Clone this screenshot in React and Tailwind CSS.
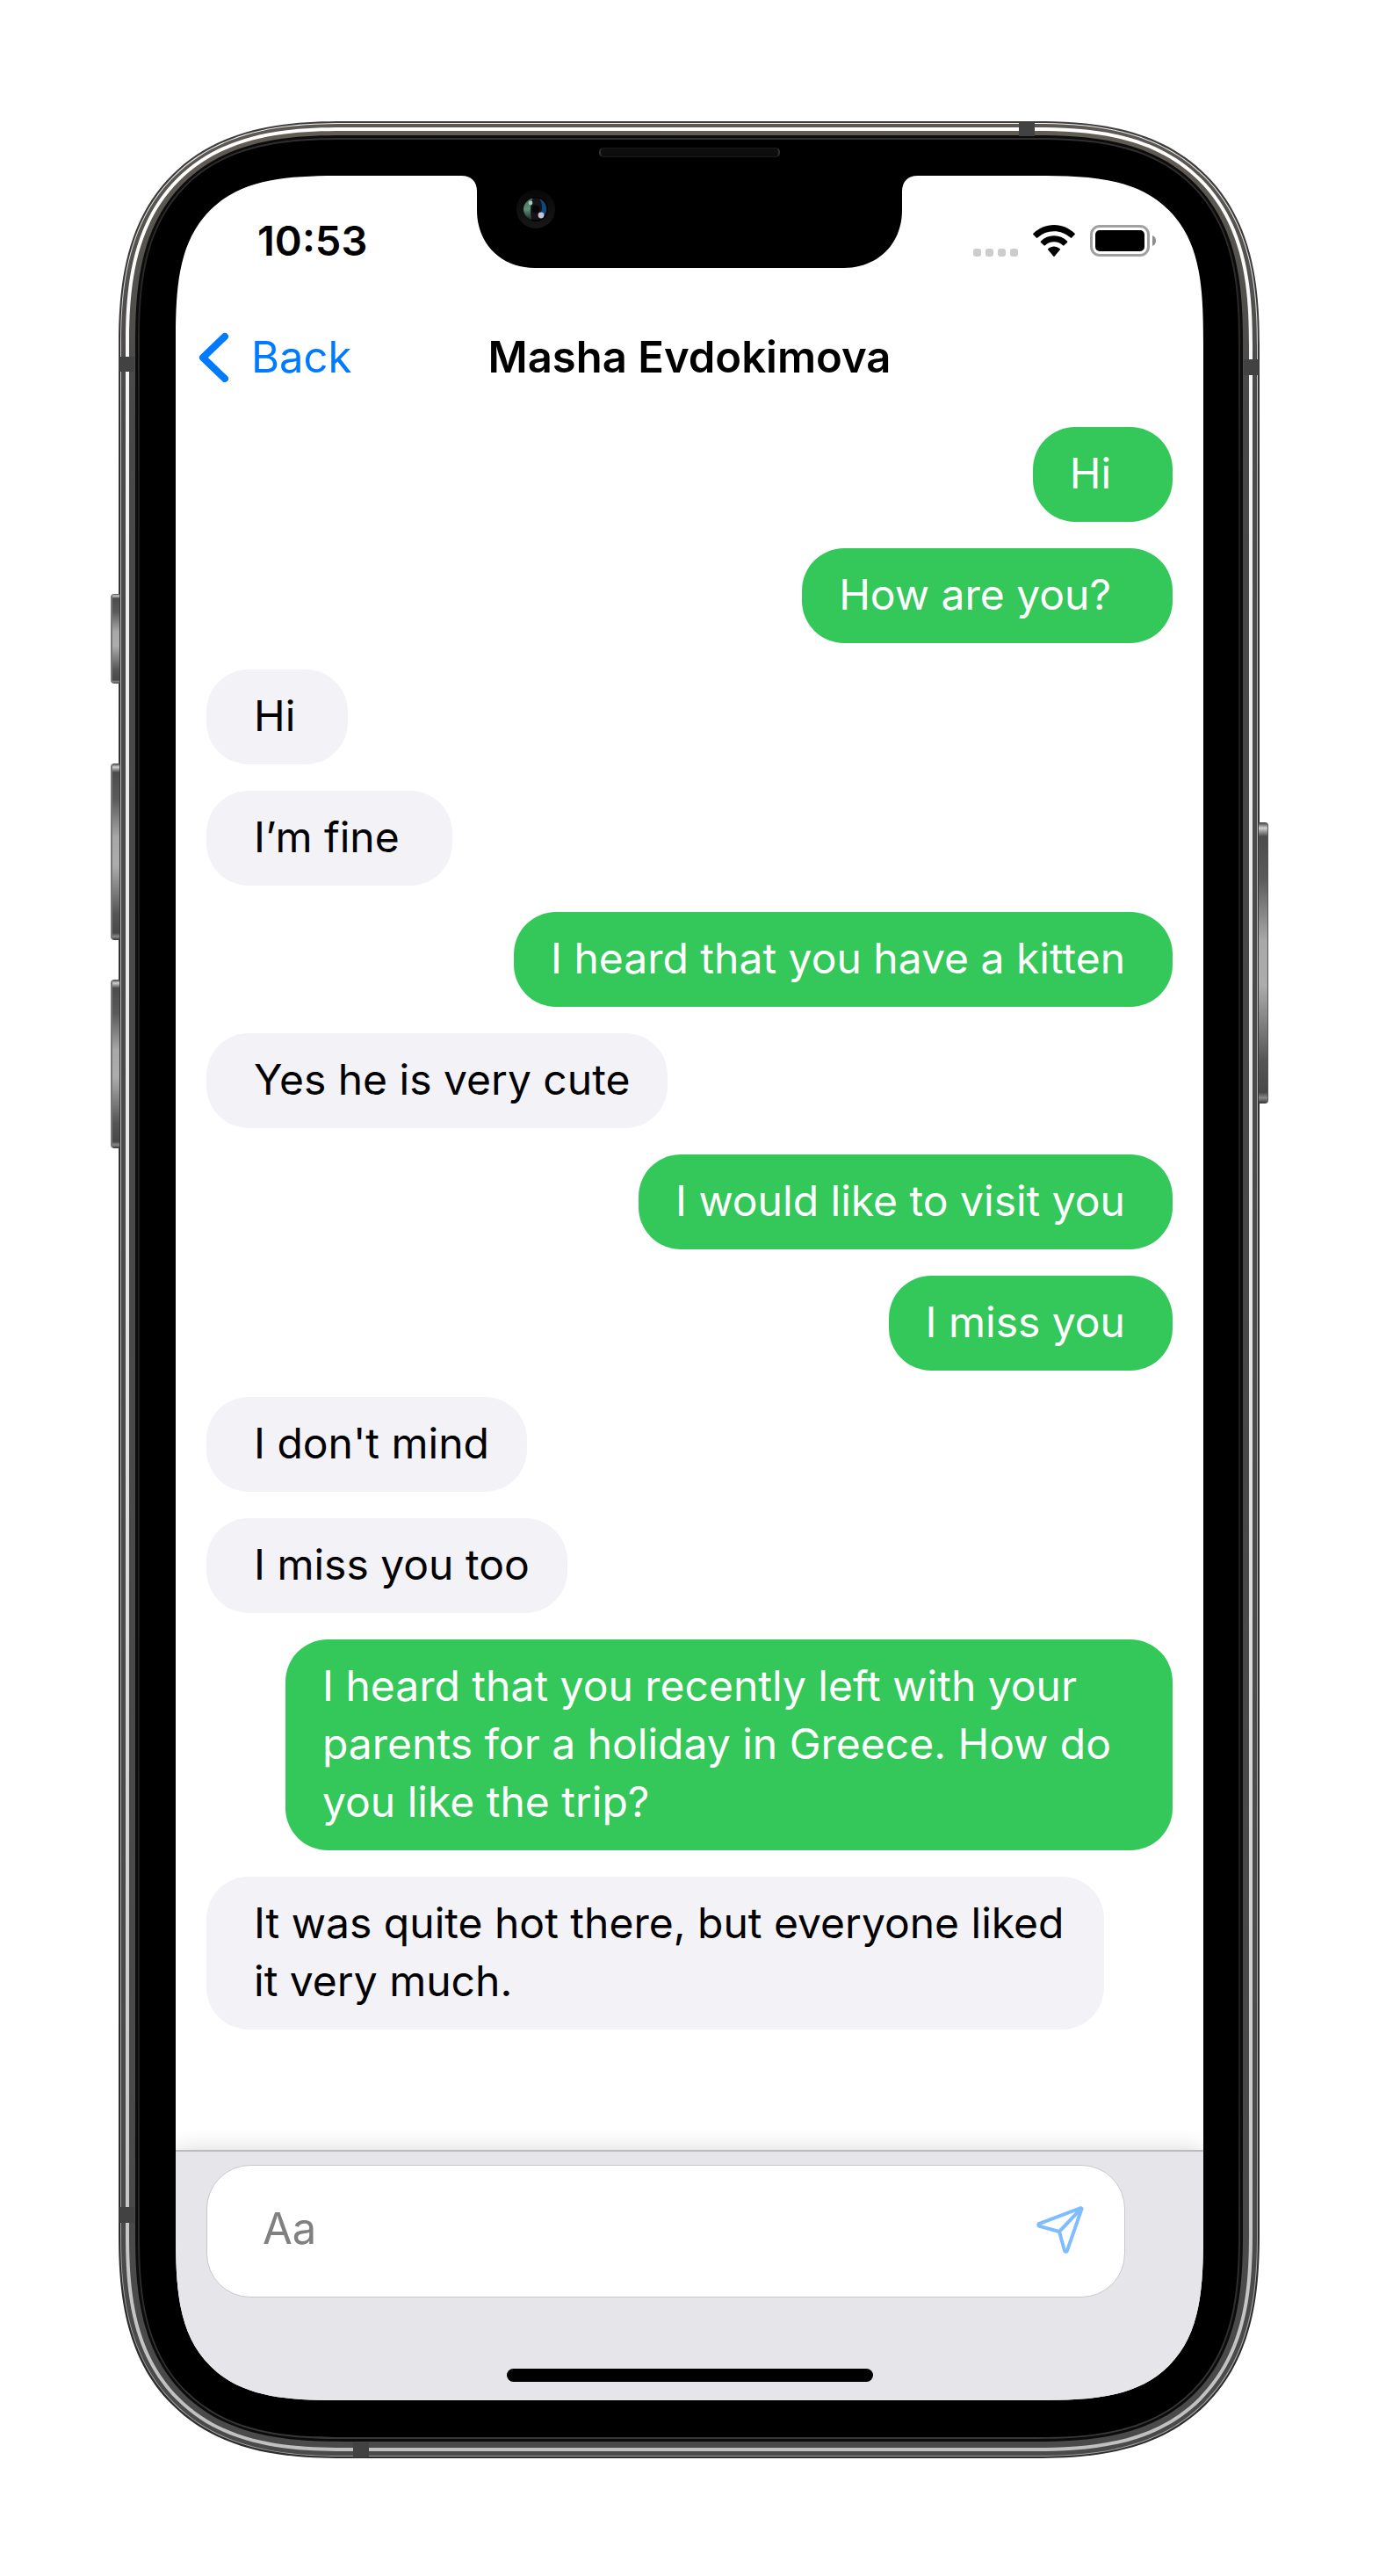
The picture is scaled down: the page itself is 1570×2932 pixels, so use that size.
import { useState } from "react";

const FONT = "font-['Inter','Liberation_Sans',sans-serif]";

const MESSAGES = [
  { mine: true, text: "Hi", pad: "pr-[70px]" },
  { mine: true, text: "How are you?", pad: "pr-[70px]" },
  { mine: false, text: "Hi", pad: "pr-[60px]" },
  { mine: false, text: "I’m fine", pad: "pr-[60px]" },
  { mine: true, text: "I heard that you have a kitten", pad: "pr-[54px]" },
  { mine: false, text: "Yes he is very cute", pad: "pr-[43px]" },
  { mine: true, text: "I would like to visit you", pad: "pr-[54px]" },
  { mine: true, text: "I miss you", pad: "pr-[54px]" },
  { mine: false, text: "I don't mind", pad: "pr-[43px]" },
  { mine: false, text: "I miss you too", pad: "pr-[43px]" },
  {
    mine: true,
    text: "I heard that you recently left with your parents for a holiday in Greece. How do you like the trip?",
    pad: "max-w-[1010px] pr-[54px]",
  },
  {
    mine: false,
    text: "It was quite hot there, but everyone liked it very much.",
    pad: "max-w-[1022px] pr-[30px]",
  },
];

function Bubble({ mine, text, pad }) {
  const side = mine
    ? "self-end bg-[#34c759] pl-[42px] text-white"
    : "self-start bg-[#f2f2f7] pl-[54px] text-black";
  return <li className={`w-fit rounded-[48px] pt-[20px] pb-[22px] ${side} ${pad}`}>{text}</li>;
}

function Chevron() {
  return (
    <svg className="h-[58px] w-[35px]" viewBox="0 0 35 58" fill="none" aria-hidden="true">
      <path d="M30 5 5 29 30 53" stroke="#007aff" strokeWidth="8" strokeLinecap="round" strokeLinejoin="round" />
    </svg>
  );
}

function StatusIcons() {
  return (
    <div className="flex items-center" aria-hidden="true">
      <div className="mt-[26px] flex gap-[5px]">
        <span className="size-[9px] rounded-[3px] bg-[#ccc]" />
        <span className="size-[9px] rounded-[3px] bg-[#ccc]" />
        <span className="size-[9px] rounded-[3px] bg-[#ccc]" />
        <span className="size-[9px] rounded-[3px] bg-[#ccc]" />
      </div>
      <svg className="ml-[17px] h-[36px] w-[48px]" viewBox="0 0 48 36">
        <path d="M24 0C15 0 6.500 3.700.4 9.700a1 1 0 0 0 0 1.400l3.400 3.500a1 1 0 0 0 1.400 0A27.500 27.500 0 0 1 24 7.200c7 0 13.600 2.600 18.800 7.400a1 1 0 0 0 1.400 0l3.400-3.500a1 1 0 0 0 0-1.400C41.500 3.700 33 0 24 0Z" />
        <path d="M24 12.300c-5.600 0-11 2.200-15 6.100a1 1 0 0 0 0 1.500l3.500 3.400a1 1 0 0 0 1.400 0 14.700 14.700 0 0 1 20.200 0 1 1 0 0 0 1.400 0l3.500-3.400a1 1 0 0 0 0-1.500c-4-3.900-9.400-6.100-15-6.100Z" />
        <path d="M24 24.500c-2.500 0-4.800.9-6.600 2.500a1 1 0 0 0 0 1.500l5.800 6.900a1 1 0 0 0 1.600 0l5.800-6.900a1 1 0 0 0 0-1.500 10 10 0 0 0-6.600-2.500Z" />
      </svg>
      <svg className="ml-[17px] h-[36px] w-[76px]" viewBox="0 0 76 36">
        <rect x="1.500" y="1.500" width="65" height="33" rx="9.500" fill="none" stroke="#a0a0a0" strokeWidth="3" />
        <rect x="6" y="6" width="56" height="24" rx="5" />
        <path d="M71 12c2.500 1 4 3 4 6s-1.500 5-4 6Z" fill="#8c8c8c" />
      </svg>
    </div>
  );
}

function Notch() {
  return (
    <svg className="absolute top-0 left-1/2 h-[105px] w-[520px] -translate-x-1/2" viewBox="0 0 520 105" aria-hidden="true">
      <defs>
        <linearGradient id="ring" x1="0" y1="0" x2="0" y2="1">
          <stop offset="0" stopColor="#070707" />
          <stop offset="1" stopColor="#171717" />
        </linearGradient>
        <linearGradient id="green" x1="0" y1="0" x2="0" y2="1">
          <stop offset="0" stopColor="#45685a" />
          <stop offset=".5" stopColor="#5f907a" />
          <stop offset="1" stopColor="#1b2a25" />
        </linearGradient>
      </defs>
      <path d="M0 0C12 0 18 7 18 18V39C18 79 47 105 84 105H436C473 105 502 79 502 39V18C502 7 508 0 520 0Z" />
      <circle cx="85" cy="38" r="22" fill="url(#ring)" />
      <circle cx="85" cy="38" r="14" fill="#000" />
      <circle cx="85" cy="38" r="12.500" fill="#141316" />
      <path d="M81 26A12.500 12.500 0 0 0 80 50C78 43 78 33 81 26Z" fill="url(#green)" stroke="url(#green)" strokeWidth="1" />
      <path d="M89 26C93 32 93 38 90 44A8 8 0 0 0 94 46A12.500 12.500 0 0 0 89 26Z" fill="#11477f" />
      <circle cx="85" cy="38" r="4.500" fill="#080708" />
      <circle cx="79" cy="31" r="2.400" fill="#a9c8bb" />
      <circle cx="91" cy="45" r="3.400" fill="#c5c3dc" />
    </svg>
  );
}

function SideKey({ className }) {
  return (
    <div
      className={`absolute bg-[linear-gradient(#3c3c3c,#d0d0d0_2%,#4c4c4c_5%,#5a5a5a_20%,#a8a8a8_42%,#acacac_58%,#555_85%,#484848_96%,#8a8a8a_98%,#333)] ${className}`}
    />
  );
}

/* Metal rim: concentric bands that run from the outside edge to the black glass. */
function Rim({ children }) {
  return (
    <div className="flex flex-1 flex-col rounded-[203px] bg-[linear-gradient(#3e3e3e,#333_15%,#2c2c2c)] p-[2px] supports-[corner-shape:superellipse(2)]:rounded-[256px] supports-[corner-shape:superellipse(2)]:[corner-shape:superellipse(1.35)]">
      <div className="flex flex-1 flex-col rounded-[201px] bg-[linear-gradient(#f0f0f0,#b8b8b8_15%,#a0a0a0)] p-px supports-[corner-shape:superellipse(2)]:rounded-[254px] supports-[corner-shape:superellipse(2)]:[corner-shape:superellipse(1.35)]">
        <div className="flex flex-1 flex-col rounded-[200px] bg-[linear-gradient(#5d5852,#4a4a4a_12%,#4a4a4a)] px-[5px] pt-[4px] pb-[5px] supports-[corner-shape:superellipse(2)]:rounded-[253px] supports-[corner-shape:superellipse(2)]:[corner-shape:superellipse(1.35)]">
          <div className="flex flex-1 flex-col rounded-[195px] bg-[linear-gradient(#fff,#eee_20%,#e6e6e6_50%,#c0c0c0)] p-[4px] supports-[corner-shape:superellipse(2)]:rounded-[248px] supports-[corner-shape:superellipse(2)]:[corner-shape:superellipse(1.37)]">
            <div className="flex flex-1 flex-col rounded-[191px] bg-[linear-gradient(#615c54,#484848_12%,#4a4a4a)] px-[7px] pt-[5px] pb-[7px] supports-[corner-shape:superellipse(2)]:rounded-[244px] supports-[corner-shape:superellipse(2)]:[corner-shape:superellipse(1.38)]">
              <div className="flex flex-1 flex-col rounded-[184px] bg-[#0c0c0c] p-[3px] supports-[corner-shape:superellipse(2)]:rounded-[237px] supports-[corner-shape:superellipse(2)]:[corner-shape:superellipse(1.4)]">
                <div className="flex flex-1 flex-col rounded-[181px] bg-[linear-gradient(#303030,#1e1e1e_15%,#1e1e1e_85%,#383838)] p-[2px] supports-[corner-shape:superellipse(2)]:rounded-[234px] supports-[corner-shape:superellipse(2)]:[corner-shape:superellipse(1.41)]">
                  <div className="flex flex-1 flex-col rounded-[179px] bg-black pt-[41px] pr-[40px] pb-[42px] pl-[41px] supports-[corner-shape:superellipse(2)]:rounded-[232px] supports-[corner-shape:superellipse(2)]:[corner-shape:superellipse(1.42)]">
                    {children}
                  </div>
                </div>
              </div>
            </div>
          </div>
        </div>
      </div>
    </div>
  );
}

export default function App() {
  const [draft, setDraft] = useState("");

  return (
    <div className={`flex min-h-screen flex-col bg-white pt-[138px] pr-[136px] pb-[134px] pl-[135px] ${FONT}`}>
      <div className="relative mx-auto flex w-full max-w-[1299px] flex-1 flex-col">
        <SideKey className="top-[538px] -left-[9px] h-[102px] w-[10px] rounded-l-[4px] border-l-2 border-[#777]" />
        <SideKey className="top-[731px] -left-[9px] h-[201px] w-[10px] rounded-l-[4px] border-l-2 border-[#777]" />
        <SideKey className="top-[977px] -left-[9px] h-[192px] w-[10px] rounded-l-[4px] border-l-2 border-[#777]" />
        <SideKey className="top-[798px] -right-[10px] h-[320px] w-[11px] rounded-r-[4px] border-r border-[#555]" />

        <Rim>
          <div className="relative flex flex-1 flex-col overflow-hidden rounded-[140px] bg-white supports-[corner-shape:superellipse(2)]:rounded-[192px] supports-[corner-shape:superellipse(2)]:[corner-shape:superellipse(1.6)]">
            <Notch />

            <div className="flex h-[148px] items-center justify-between pr-[53px] pl-[93px]">
              <time className="text-[47px] leading-[56px] font-semibold">10:53</time>
              <StatusIcons />
            </div>

            <header className="grid h-[118px] grid-cols-[1fr_auto_1fr] items-center px-[26px] text-[49px] leading-[66px]">
              <button type="button" className="flex items-center gap-[25px] justify-self-start text-[#007aff]">
                <Chevron />
                Back
              </button>
              <h1 className="font-semibold">Masha Evdokimova</h1>
            </header>

            <ul className="flex flex-1 flex-col gap-[30px] px-[35px] pt-[20px] pb-[60px] text-[48px] leading-[66px]">
              {MESSAGES.map((m, i) => (
                <Bubble key={i} {...m} />
              ))}
            </ul>

            <footer className="flex flex-col border-t-2 border-[#bcbcbe] bg-[#e5e5ea] pt-[15px] pb-[21px] shadow-[0_0_24px_rgba(0,0,0,0.16)]">
              <form
                className="mr-[89px] ml-[35px] flex h-[151px] items-center rounded-[50px] border border-[#c8c8cc] bg-white pr-[45px] pb-[6px] pl-[63px]"
                onSubmit={(e) => e.preventDefault()}
              >
                <input
                  type="text"
                  aria-label="Message"
                  placeholder="Aa"
                  value={draft}
                  onChange={(e) => setDraft(e.target.value)}
                  className="min-w-0 flex-1 bg-transparent text-[49px] leading-[66px] outline-none placeholder:text-[#808080]"
                />
                <button type="submit" aria-label="Send">
                  <svg className="h-[56px] w-[56px]" viewBox="0 0 56 56" fill="none" aria-hidden="true">
                    <path
                      d="M51.500 4.200 4.500 21.800a1.600 1.600 0 0 0 0 3.100L27 31l6 21.700a1.500 1.500 0 0 0 2.900.2L52.500 5.200a.8.8 0 0 0-1-1ZM27 31 52 4.700"
                      stroke="#80bdff"
                      strokeWidth="4"
                      strokeLinejoin="round"
                    />
                  </svg>
                </button>
              </form>
              <div className="mx-auto mt-[81px] h-[15px] w-[417px] rounded-full bg-black" />
            </footer>
          </div>
        </Rim>

        {/* Antenna bands */}
        <div className="absolute top-[268px] left-px h-[17px] w-[17px] bg-[#424242]" />
        <div className="absolute bottom-[268px] left-px h-[18px] w-[17px] bg-[#424242]" />
        <div className="absolute top-[271px] right-px h-[18px] w-[17px] bg-[#424242]" />
        <div className="absolute top-[2px] right-[256px] h-[15px] w-[18px] bg-[#424242]" />
        <div className="absolute bottom-px left-[267px] h-[17px] w-[18px] bg-[#424242]" />

        {/* Earpiece */}
        <div className="absolute top-[30px] left-1/2 h-[11px] w-[206px] -translate-x-1/2 rounded-[5px] border border-x-2 border-[#1a1a1a] border-x-[#303030] bg-[#0d0d0d]" />
      </div>
    </div>
  );
}
